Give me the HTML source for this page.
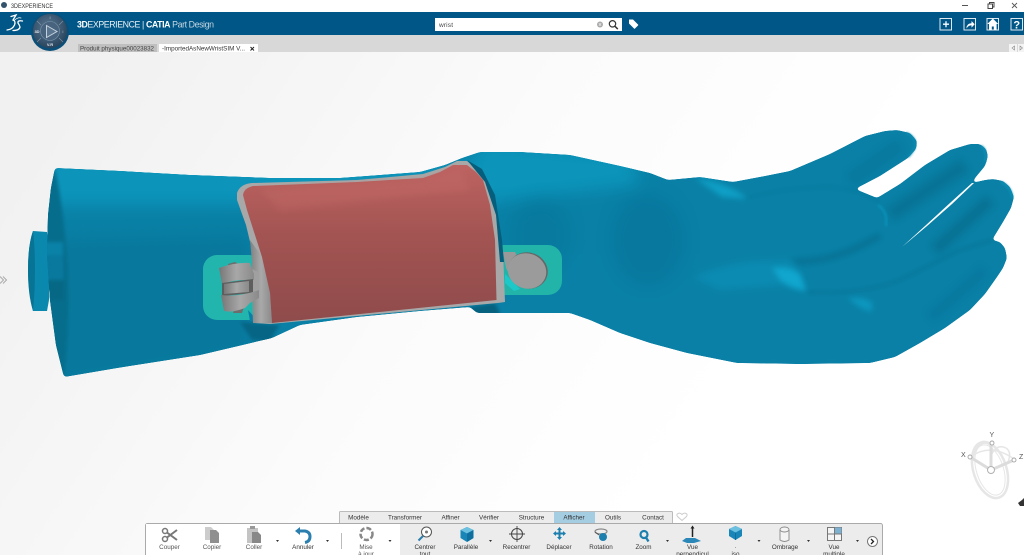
<!DOCTYPE html>
<html><head><meta charset="utf-8"><style>
html,body{margin:0;padding:0;width:1024px;height:555px;overflow:hidden;background:#fff}
svg{display:block;font-family:"Liberation Sans",sans-serif}
</style></head><body>
<svg width="1024" height="555" viewBox="0 0 1024 555" xmlns="http://www.w3.org/2000/svg">
<defs>
<linearGradient id="bg" x1="0" y1="0.3" x2="0.75" y2="0.55"><stop offset="0" stop-color="#f1f1f1"/><stop offset="0.55" stop-color="#fbfbfb"/><stop offset="1" stop-color="#fff"/></linearGradient>
<linearGradient id="red" x1="0" y1="0" x2="0" y2="1"><stop offset="0" stop-color="#bd6361"/><stop offset="0.45" stop-color="#a25452"/><stop offset="1" stop-color="#8f4b4b"/></linearGradient>
<linearGradient id="gr" x1="0" y1="0" x2="1" y2="0"><stop offset="0" stop-color="#7f8080"/><stop offset="0.5" stop-color="#a9a9a9"/><stop offset="1" stop-color="#8a8a8a"/></linearGradient>
<linearGradient id="bar" x1="0" y1="0" x2="1" y2="0"><stop offset="0" stop-color="#777"/><stop offset="0.5" stop-color="#a8a8a8"/><stop offset="1" stop-color="#8a8a8a"/></linearGradient>
<radialGradient id="cmp" cx="0.45" cy="0.4" r="0.65"><stop offset="0" stop-color="#5c7a93"/><stop offset="0.7" stop-color="#36526c"/><stop offset="1" stop-color="#263f56"/></radialGradient>
<filter id="b2" x="-50%" y="-50%" width="200%" height="200%" color-interpolation-filters="sRGB"><feGaussianBlur stdDeviation="2"/></filter>
<filter id="b3" x="-50%" y="-50%" width="200%" height="200%" color-interpolation-filters="sRGB"><feGaussianBlur stdDeviation="3.500"/></filter>
<filter id="b6" x="-50%" y="-50%" width="200%" height="200%" color-interpolation-filters="sRGB"><feGaussianBlur stdDeviation="8"/></filter>
<filter id="b1" x="-20%" y="-20%" width="140%" height="140%" color-interpolation-filters="sRGB"><feGaussianBlur stdDeviation="1"/></filter>
<filter id="goo" filterUnits="userSpaceOnUse" x="20" y="110" width="1004" height="290" color-interpolation-filters="sRGB"><feGaussianBlur stdDeviation="1.800"/><feColorMatrix type="matrix" values="1 0 0 0 0 0 1 0 0 0 0 0 1 0 0 0 0 0 14 -6.500"/></filter>
<clipPath id="hc"><path d="M55 168 L120 171 L190 175 L270 178 L340 178 L420 172 L445 165 L462 158 L480 152 L520 152 L570 155 L620 166 L650 173 L668 180 L700 177 L733 182 L765 176 L790 171 L830 154 L865 136 L885 131 L897 130 L910 133 L917 141 L916 149 L908 158 L880 176 L855 189 L877 198 L900 184 L925 165 L950 150 L960 147 L970 144 L980 144 L986 149 L988 156 L985 166 L975 178 L972 183 L985 180 L993 179 L1003 181 L1010 187 L1014 197 L1011 208 L1003 222 L992 240 L1000 242 L1005 248 L1007 258 L1003 268 L997 277 L985 294 L970 310 L945 328 L920 343 L895 357 L870 363 L800 364 L737 363 L687 353 L650 343 L620 333 L590 320 L570 313 L530 313 L477 313 L470 307 L420 311 L357 317 L300 325 L272 338 L200 355 L117 368 L64 377 L56 345 L50 300 L47 255 L48 215 L51 188Z"/></clipPath>
</defs>

<!-- backgrounds -->
<rect width="1024" height="12" fill="#fff"/>
<rect y="12" width="1024" height="23" fill="#005686"/>
<rect y="35" width="1024" height="17" fill="#d8d8d8"/>
<rect y="52" width="1024" height="503" fill="url(#bg)"/>

<!-- title bar -->
<circle cx="4" cy="5" r="3" fill="#33536d"/>
<text x="11" y="8" font-size="6.600" fill="#333" textLength="42" lengthAdjust="spacingAndGlyphs">3DEXPERIENCE</text>
<path d="M962 5.500h6" stroke="#555" stroke-width="1"/>
<path d="M988 4h4.500v4.500h-4.500zM989.500 4v-1.500h4.500v4.500h-1.500" fill="none" stroke="#444" stroke-width="1"/>
<path d="M1012 3l5 5M1017 3l-5 5" stroke="#555" stroke-width=".9"/>

<!-- DS logo -->
<g fill="none" stroke="#fff" stroke-linecap="round">
<path d="M11 16.500 L16 15 L13 20 Q16 21 14.500 25 Q12.500 29.500 7 30" stroke-width="1.300"/>
<path d="M22.500 21 Q17.500 20 18 23 Q19.500 25 20 27 Q19.500 30.500 13 30.500" stroke-width="1.300"/>
<path d="M14 20.500 Q18 17 21 18" stroke-width=".8"/>
</g>

<!-- compass -->
<circle cx="50" cy="32" r="19" fill="#0b4f78"/>
<circle cx="50" cy="31" r="17" fill="url(#cmp)"/>
<circle cx="50" cy="31" r="9.500" fill="#47637d" stroke="#7d97ad" stroke-width=".6"/>
<path d="M46.500 25.500 L57 31.500 L46.500 37.500Z" fill="#5a7690" stroke="#c4d2dd" stroke-width="1"/>
<path d="M37 21l4 4M63 21l-4 4M37 42l4-4M63 42l-4-4" stroke="#7f95a9" stroke-width=".6"/>
<text x="50" y="19" font-size="4" fill="#b9c6d2" text-anchor="middle">I</text>
<text x="37" y="33" font-size="4" fill="#e2e8ee" text-anchor="middle" font-weight="bold">3D</text>
<text x="63" y="33" font-size="4" fill="#b9c6d2" text-anchor="middle">i</text>
<text x="50" y="46" font-size="4" fill="#e2e8ee" text-anchor="middle" font-weight="bold">V.R</text>

<!-- app title -->
<text x="77" y="27.500" font-size="8.800" fill="#e8f0f5" textLength="137"><tspan font-weight="bold" fill="#fff">3D</tspan>EXPERIENCE | <tspan font-weight="bold" fill="#fff">CATIA</tspan> <tspan fill="#c5d6e2">Part Design</tspan></text>

<!-- search -->
<rect x="435" y="18" width="187" height="13" fill="#fff"/>
<text x="439" y="27" font-size="6.500" fill="#444" textLength="14">wrist</text>
<circle cx="600" cy="24.500" r="3" fill="#aaa"/>
<path d="M598.800 23.300l2.400 2.400M601.200 23.300l-2.400 2.400" stroke="#eee" stroke-width=".7"/>
<circle cx="612.500" cy="23.800" r="3.200" fill="none" stroke="#333" stroke-width="1.200"/>
<path d="M615 26.300l2.800 2.800" stroke="#333" stroke-width="1.500"/>
<path d="M629 19.500h4l5 5q.5 .5 0 1l-3 3q-.5 .5-1 0l-5-5z" fill="#fff"/>

<!-- right header icons -->
<g fill="none" stroke="#dfe9f0" stroke-width="1"><rect x="940" y="18.500" width="11.500" height="11.500"/><rect x="964" y="18.500" width="11.500" height="11.500"/><rect x="987" y="18.500" width="11.500" height="11.500"/><rect x="1011" y="18.500" width="11.500" height="11.500"/></g>
<path d="M943 24.200h6M946 21.200v6" stroke="#fff" stroke-width="1.300"/>
<path d="M966.500 28.500q0-5 5-5.200v-2.300l3.200 3.300-3.200 3.300v-2.300q-3 0-5 3.200z" fill="#fff"/>
<path d="M992.800 18.500l-5.500 5.500h1.700v6h2.800v-3.500h2v3.500h2.800v-6h1.700z" fill="#fff"/>
<text x="1016.800" y="28.500" font-size="11" font-weight="bold" fill="#fff" text-anchor="middle">?</text>

<!-- doc tabs -->
<rect x="78" y="44" width="79" height="8" fill="#bfbfbf"/>
<text x="80" y="50.300" font-size="6.300" fill="#444" textLength="74" lengthAdjust="spacingAndGlyphs">Produit physique00023832</text>
<rect x="159" y="44" width="99" height="8" fill="#fff"/>
<text x="162" y="50.300" font-size="6.300" fill="#333" textLength="83" lengthAdjust="spacingAndGlyphs">-ImportedAsNewWristSIM V...</text>
<path d="M250.500 47l3.500 3.500M254 47l-3.500 3.500" stroke="#222" stroke-width="1"/>
<rect x="1009" y="44" width="8" height="8" fill="#f4f4f4"/><rect x="1018" y="44" width="6" height="8" fill="#f4f4f4"/>
<path d="M1014.500 46v4l-2.500-2zM1020 46v4l2.500-2z" fill="none" stroke="#888" stroke-width=".6"/>

<!-- left arrow -->
<path d="M0 276.500l3.500 3.500-3.500 3.500M3 276.500l3.500 3.500-3.500 3.500" fill="none" stroke="#aaa" stroke-width="1"/>

<!-- knob -->
<path d="M33 231 L47 232 L49 245 L49 300 L47 311 L33 311 Q28 290 28 270 Q28 245 33 231Z" fill="#0a88ae"/>
<path d="M33 231 Q28 245 28 270 Q28 295 33 311 Q35 290 35 270 Q35 248 33 231Z" fill="#087495"/>

<!-- HAND -->
<g filter="url(#goo)"><g clip-path="url(#hc)">
<rect x="0" y="100" width="1024" height="300" fill="#0a80a6"/>
<!-- forearm shading -->
<path d="M40 155 L470 165 L480 140 L630 155 L640 185 L470 205 L40 205Z" fill="#0c94ba" filter="url(#b6)"/>
<path d="M40 240 L250 235 L250 350 L40 385Z" fill="#08789c" filter="url(#b6)"/>
<ellipse cx="648" cy="240" rx="36" ry="45" fill="#07739a" opacity=".6" filter="url(#b6)"/>
<ellipse cx="540" cy="235" rx="30" ry="35" fill="#08789c" opacity=".7" filter="url(#b6)"/>
<!-- cylinder cap -->
<path d="M55 168 Q76 270 64 377 L40 377 L40 168Z" fill="#066d8c"/>
<path d="M40 242h23l1 58h-24z" fill="#09799e"/>
<path d="M40 242h23v13h-23z" fill="#0a82a8"/>
<path d="M40 280h24v20h-24z" fill="#066884"/>
<!-- fingers back -->
<path d="M695 178 Q730 183 748 199 L722 197 Z" fill="#0f9fc6" filter="url(#b2)"/>
<path d="M850 180 L900 145" fill="none" stroke="#08749a" stroke-width="14" opacity=".6" filter="url(#b3)"/>
<path d="M890 215 L965 165" fill="none" stroke="#076f90" stroke-width="15" opacity=".7" filter="url(#b3)"/>
<path d="M935 250 L990 200" fill="none" stroke="#076c8c" stroke-width="12" opacity=".7" filter="url(#b3)"/>
<path d="M930 318 L985 270" fill="none" stroke="#07739a" stroke-width="12" opacity=".5" filter="url(#b3)"/>
<!-- front finger edges -->
<path d="M745 198 Q790 187 830 187 Q865 190 880 203" fill="none" stroke="#07759a" stroke-width="2" opacity=".5" filter="url(#b1)"/>
<path d="M790 262 Q830 262 862 245 L880 236" fill="none" stroke="#066d8e" stroke-width="6" opacity=".75" filter="url(#b2)"/>
<path d="M807 292 Q860 295 900 280 L960 250 L992 240" fill="none" stroke="#086f90" stroke-width="2.500" opacity=".55" filter="url(#b1)"/>
<!-- palm highlights -->
<path d="M693 277 Q720 266 747 262 L793 260 L807 290 L780 285 L720 290Z" fill="#0c8bb2" filter="url(#b3)"/>
<path d="M772 268 Q790 266 800 274 L806 291 Q790 288 780 280Z" fill="#10a6ce" filter="url(#b2)"/>
<path d="M848 298 Q866 296 873 304 L871 312 Q858 308 848 298Z" fill="#0d97bf" filter="url(#b2)"/>
<path d="M470 307 L477 313 L500 313 L495 303Z" fill="#06627f"/>
<path d="M240 322 L280 325 L270 340 L252 340Z" fill="#066585"/>
</g></g>
<!-- sliver between fingers -->
<path d="M972 183 L950 203 L925 226 L902 247 L927 226 L952 204 L974 183Z" fill="#fff"/>
<!-- finger tip rims -->
<path d="M906 133 Q916 137 915 146 Q914 150 908 157" fill="none" stroke="#0c8cb2" stroke-width="2" filter="url(#b1)"/>
<path d="M981 146 Q988 151 985 162" fill="none" stroke="#0c90b7" stroke-width="2" filter="url(#b1)"/>
<path d="M1001 182 Q1012 188 1012 198" fill="none" stroke="#0c90b7" stroke-width="2" filter="url(#b1)"/>
<path d="M878 205 Q888 212 886 226" fill="none" stroke="#0b90b7" stroke-width="2.500" filter="url(#b1)"/>

<!-- pads -->
<rect x="203" y="255" width="60" height="65" rx="14" fill="#22b5ad"/>
<rect x="490" y="245" width="72" height="50" rx="14" fill="#22b3a9"/>
<path d="M248 310 L258 321 L250 321Z" fill="#0a7fa5"/>

<!-- right disc -->
<path d="M503 252 L515 252 L520 262 L512 280 L506 268Z" fill="#999"/>
<path d="M505 274 L520 289 L514 291 L505 283Z" fill="#1ec8c9"/>
<ellipse cx="528" cy="270.500" rx="20" ry="18" fill="#666" transform="rotate(20 528 270.500)"/>
<ellipse cx="527" cy="271" rx="19.500" ry="17.500" fill="#9b9b9b" transform="rotate(20 527 271)"/>

<!-- grey splint -->
<path d="M237 193 Q240 184 252 183 L357 180 L423 174 L445 167 L457 161 L467 161 L480 172 L487 182 L494 200 L498 217 L503 250 L505 302 L498 303 L270 324 L253 323 L252 250 L246 225 L237 200Z" fill="#a8a8a8"/>
<path d="M467 160 L482 169 L495 195 L502 240 L504 262 L500 262 L496 215 L485 182Z" fill="#055f7c"/>
<path d="M253 323 L252 262 L250 240 L262 257 L270 293 L272 323Z" fill="url(#gr)"/>
<!-- red -->
<path d="M243 195 Q244 188 253 186 L357 182 L423 178 L440 172 L453 165 L467 165 L476 172 L483 180 L490 205 L495 240 L496.500 300 L272 323 L270 293 L262 257 L247 210Z" fill="url(#red)"/>
<path d="M260 190 L420 180 L460 168 L470 190 L280 210Z" fill="#c26967" opacity=".45" filter="url(#b3)"/>

<!-- hinge -->
<path d="M250 268 L258 272 L259 295 L253 296Z" fill="#a0a0a0"/>
<path d="M228 264 L235 262 L240 265 L236 268 L229 268Z" fill="#6d6d6d"/>
<path d="M219 268 Q235 262 250 263 L254 274 L254 280 Q235 279 222 284Z" fill="url(#bar)"/>
<path d="M222 283 L253 279 L253 293 L222 296Z" fill="#5e5e5e"/>
<path d="M224 284 L249 281 L249 292 L224 294Z" fill="url(#bar)"/>
<path d="M235 308 L244 307 L242 313 L233 313Z" fill="#6d6d6d"/>
<path d="M221 295 Q240 297 259 290 L259 298 L250 303 L245 308 Q232 313 224 311Z" fill="url(#bar)"/>

<!-- gizmo -->
<g fill="none" stroke="#e6e6e6">
<ellipse cx="990" cy="470" rx="16.500" ry="29" transform="rotate(-18 990 470)" stroke-width="2.500"/>
<ellipse cx="990" cy="470" rx="13.500" ry="26" transform="rotate(-18 990 470)" stroke-width="1"/>
<path d="M972 456 Q991 443 1014 459" stroke-width="1.500"/>
<path d="M973 460 Q975 444 985 443 Q992 444 993 452 Q998 444 1006 448 Q1012 452 1008 462" stroke-width="1.500"/>
</g>
<g stroke="#dcdcdc" stroke-width="3" fill="none"><path d="M991 470V443M991 470L970 457M991 470L1014 460"/></g>
<g fill="#fff" stroke="#a5a5a5" stroke-width=".9"><circle cx="992" cy="443" r="2"/><circle cx="970" cy="457" r="2"/><circle cx="1014" cy="460" r="2"/></g>
<circle cx="991" cy="470" r="3.500" fill="#fff" stroke="#b0b0b0" stroke-width="1"/>
<g font-size="7" fill="#555"><text x="961" y="457">X</text><text x="989.500" y="437">Y</text><text x="1019" y="459">Z</text></g>
<path d="M1018 503l4-3 2-2v8h-4z" fill="#333"/>

<!-- toolbar tabs -->
<rect x="339.500" y="511.500" width="333" height="13" rx="1" fill="#ececec" stroke="#bbb"/>
<rect x="554" y="512" width="41" height="12" fill="#a5cde2"/>
<g font-size="6.300" fill="#333" text-anchor="middle">
<text x="358.500" y="519.500">Modèle</text><text x="405" y="519.500">Transformer</text><text x="450.500" y="519.500">Affiner</text><text x="489" y="519.500">Vérifier</text><text x="531.500" y="519.500">Structure</text><text x="574" y="519.500">Afficher</text><text x="613" y="519.500">Outils</text><text x="653" y="519.500">Contact</text>
</g>
<path d="M682 520.500l-4.500-4q-1.500-2 .5-3t4 1q2-2 4-1t.5 3z" fill="none" stroke="#ccc" stroke-width="1"/>

<!-- toolbar -->
<rect x="145.500" y="523.500" width="737" height="36" rx="2" fill="#ececec" stroke="#aaa"/>
<rect x="146" y="524" width="254" height="31" fill="#fff"/>
<line x1="341.500" y1="533" x2="341.500" y2="549" stroke="#bbb"/>
<g font-size="6.300" fill="#555" text-anchor="middle">
<text x="169.500" y="549">Couper</text><text x="212" y="549">Copier</text><text x="254" y="549">Coller</text><text x="303" y="549" fill="#333">Annuler</text><text x="366" y="549">Mise</text><text x="366" y="556">à jour</text>
<g fill="#333"><text x="425" y="549">Centrer</text><text x="425" y="556">tout</text><text x="466" y="549">Parallèle</text><text x="516.500" y="549">Recentrer</text><text x="559" y="549">Déplacer</text><text x="601" y="549">Rotation</text><text x="643.500" y="549">Zoom</text><text x="692.500" y="549">Vue</text><text x="692.500" y="556">perpendicul</text><text x="735.500" y="549">·</text><text x="735.500" y="556">iso</text><text x="785" y="549">Ombrage</text><text x="834" y="549">Vue</text><text x="834" y="556">multiple</text></g>
</g>
<!-- dropdown arrows -->
<g fill="#333"><path d="M276 540h3l-1.500 2zM326 540h3l-1.500 2zM388.500 540h3l-1.500 2zM489 540h3l-1.500 2zM666 540h3l-1.500 2zM757.500 540h3l-1.500 2zM807 540h3l-1.500 2zM856 540h3l-1.500 2z"/></g>
<!-- scissors -->
<g fill="none" stroke="#777" stroke-width="1.500"><circle cx="165" cy="531" r="2.500"/><circle cx="165" cy="539" r="2.500"/></g><path d="M167 532.500L177 540M167 537.500L177 530" stroke="#777" stroke-width="2"/>
<!-- copy -->
<path d="M205 527h6l3 3v10h-9z" fill="#ccc"/><path d="M210 530h6l3 3v10h-9z" fill="#8f8f8f"/>
<!-- paste -->
<path d="M247 528h11v15h-11z" fill="#c4c4c4"/><path d="M250 526h5v3h-5z" fill="#999"/><path d="M252 532h6l3 3v8h-9z" fill="#888"/>
<!-- undo -->
<path d="M298 531h7q5 1 5 5.500 0 5-5 6" fill="none" stroke="#2b7fae" stroke-width="3"/><path d="M300 527l-5 4 5 4z" fill="#2b7fae"/>
<!-- update -->
<g fill="none" stroke="#888" stroke-width="2.500" stroke-dasharray="5 2"><circle cx="366.500" cy="534" r="6"/></g>
<!-- fit all -->
<circle cx="426.500" cy="532" r="5" fill="#fff" stroke="#555" stroke-width="1"/><circle cx="426.500" cy="532" r="1.500" fill="#777"/><path d="M423 536l-4.500 4.500" stroke="#2b7fae" stroke-width="2"/>
<!-- parallel cube -->
<path d="M467 527l6.500 3v8l-6.500 4-6.500-4v-8z" fill="#1a86b8"/><path d="M467 527l6.500 3-6.500 3.500-6.500-3.500z" fill="#6cc0e0"/><path d="M467 533.500v8.500l6.500-4v-8z" fill="#0f6f9f"/>
<!-- recenter -->
<circle cx="517" cy="534" r="5.500" fill="none" stroke="#444" stroke-width="1"/><path d="M517 526v16M509 534h16" stroke="#444" stroke-width=".9"/>
<!-- move -->
<path d="M559.500 527l2.500 3h-1.500v2.500h2.500v-1.500l3 2.500-3 2.500v-1.500h-2.500v2.500h1.500l-2.500 3-2.500-3h1.500v-2.500h-2.500v1.500l-3-2.500 3-2.500v1.500h2.500v-2.500h-1.500z" fill="#1d7fae"/>
<!-- rotation -->
<ellipse cx="601" cy="531.500" rx="6" ry="2.500" fill="none" stroke="#888" stroke-width="1.200"/><circle cx="603" cy="537" r="4" fill="#1d7fae"/><path d="M595 532l4 3" stroke="#555"/>
<!-- zoom -->
<circle cx="644" cy="534.500" r="3.500" fill="none" stroke="#1d7fae" stroke-width="2.200"/><path d="M646 537.500l2.500 4" stroke="#1d7fae" stroke-width="2.300"/>
<!-- normal view -->
<path d="M692.500 527v10" stroke="#222" stroke-width="1.500"/><path d="M692.500 525.500l-2 3h4z" fill="#222"/><path d="M686 538h9l6 3-7 2h-7l-5-2z" fill="#2b87b8"/>
<!-- iso -->
<path d="M735.500 526l6.500 3v7l-6.500 4-6.500-4v-7z" fill="#1a86b8"/><path d="M735.500 526l6.500 3-6.500 3.500-6.500-3.500z" fill="#6cc0e0"/><path d="M735.500 532.500v7.500" stroke="#0f6f9f"/>
<!-- shading -->
<path d="M780 530v10q4.500 3 9 0v-10" fill="#f4f4f4" stroke="#888" stroke-width=".9"/><ellipse cx="784.500" cy="529.500" rx="4.500" ry="2.500" fill="#f4f4f4" stroke="#888" stroke-width=".9"/>
<!-- multi view -->
<rect x="827.500" y="527.500" width="14" height="13" fill="#f4f4f4" stroke="#777"/><rect x="834.500" y="527.500" width="7" height="6.500" fill="#7eb0cf"/><path d="M834.500 527.500v13M827.500 534h14" stroke="#777"/>
<!-- next -->
<circle cx="872.500" cy="541.500" r="5" fill="#fff" stroke="#777"/><path d="M871 539l2.500 2.500-2.500 2.500" fill="none" stroke="#222" stroke-width="1.300"/>
</svg>
</body></html>
